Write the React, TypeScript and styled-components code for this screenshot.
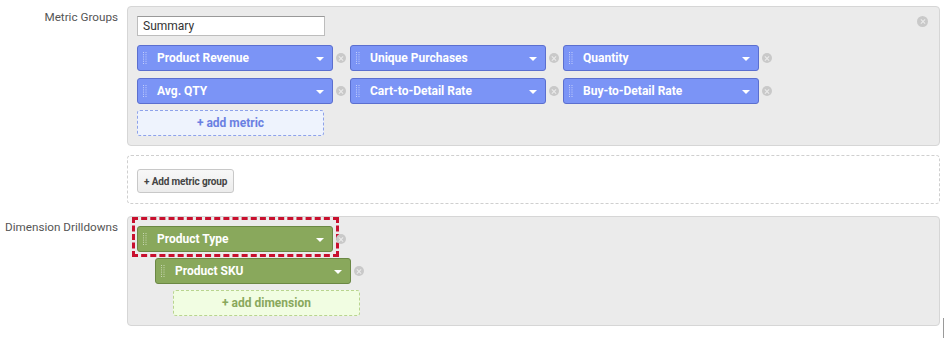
import styled, { createGlobalStyle } from "styled-components";

const GlobalStyle = createGlobalStyle`
  body {
    margin: 0;
    background: #ffffff;
    font-family: Roboto, "Liberation Sans", Arial, sans-serif;
  }
`;

const Page = styled.div`
  display: grid;
  grid-template-columns: 127px 813px;
  align-content: start;
  row-gap: 9px;
  padding-top: 6px;
  position: relative;
  height: 332px;
`;

const Label = styled.div<{ $top?: number }>`
  text-align: right;
  padding-right: 9px;
  padding-top: ${(p) => p.$top ?? 4}px;
  font-size: 11.7px;
  color: #555;
`;

const Panel = styled.div`
  position: relative;
  background: #ebebeb;
  border: 1px solid #d6d6d6;
  border-radius: 4px;
  padding: 9px;
  display: flex;
  flex-direction: column;
  align-items: flex-start;
`;

const DashedPanel = styled.div`
  border: 1px dashed #cfcfcf;
  border-radius: 4px;
  padding: 13px 9px 0;
  height: 49px;
  box-sizing: border-box;
  margin-bottom: 3px;
`;

const NameInput = styled.div`
  width: 188px;
  height: 20px;
  box-sizing: border-box;
  border: 1px solid #bdbdbd;
  border-top-color: #999;
  background: #fff;
  font-size: 12px;
  color: #333;
  padding: 2px 5px;
  margin-bottom: 9px;
`;

const ChipRow = styled.div<{ $gap?: number }>`
  display: flex;
  margin-bottom: ${(p) => p.$gap ?? 7}px;
`;

const ChipWrap = styled.div<{ $indent?: number }>`
  display: flex;
  align-items: center;
  margin-left: ${(p) => p.$indent ?? 0}px;
  margin-right: 4px;
  gap: 3px;
`;

const Chip = styled.div<{ $kind: "metric" | "dim"; $marked?: boolean }>`
  position: relative;
  width: 196px;
  height: 26px;
  box-sizing: border-box;
  border-radius: 3px;
  border: 1px solid ${(p) => (p.$kind === "metric" ? "#5b6fcf" : "#6b8844")};
  background: ${(p) => (p.$kind === "metric" ? "#7b94f6" : "#89a85c")};
  color: #fff;
  font-weight: 700;
  font-size: 12px;
  display: flex;
  align-items: center;
  padding-left: 19px;
  ${(p) =>
    p.$marked &&
    `
    &::after {
      content: "";
      position: absolute;
      left: -6px;
      top: -10px;
      right: -7px;
      bottom: -6px;
      border: 3px dashed #c8102e;
    }
  `}
`;

const GripSvg = styled.svg`
  position: absolute;
  left: 5px;
  top: 6px;
`;

const Grip = () => (
  <GripSvg width="4" height="13" viewBox="0 0 4 13">
    {[0, 1, 2, 3, 4, 5].map((r) =>
      [0, 1].map((c) => (
        <rect key={`${r}-${c}`} x={c * 2.5} y={r * 2.2} width="1" height="1" fill="rgba(255,255,255,0.55)" />
      ))
    )}
  </GripSvg>
);

const Caret = styled.span`
  position: absolute;
  right: 8px;
  top: 11px;
  width: 0;
  height: 0;
  border-left: 4px solid transparent;
  border-right: 4px solid transparent;
  border-top: 4px solid #fff;
`;

const CloseDot = styled.span`
  width: 10px;
  height: 10px;
  border-radius: 50%;
  background: #c9c9c9;
  position: relative;
  flex: none;
  &::before,
  &::after {
    content: "";
    position: absolute;
    left: 2px;
    top: 4.5px;
    width: 6px;
    height: 1px;
    background: #ebebeb;
    transform: rotate(45deg);
  }
  &::after {
    transform: rotate(-45deg);
  }
`;

const PanelClose = styled(CloseDot)`
  position: absolute;
  top: 9px;
  right: 11px;
  width: 11px;
  height: 11px;
  &::before,
  &::after {
    left: 2.5px;
    top: 5px;
  }
`;

const AddButton = styled.div<{ $kind: "metric" | "dim"; $indent?: number }>`
  width: 187px;
  height: 26px;
  box-sizing: border-box;
  margin-left: ${(p) => p.$indent ?? 0}px;
  border-radius: 3px;
  border: 1px dashed ${(p) => (p.$kind === "metric" ? "#8ea2ea" : "#b9d48f")};
  background: ${(p) => (p.$kind === "metric" ? "#eef3fd" : "#f1fde2")};
  color: ${(p) => (p.$kind === "metric" ? "#6a80e2" : "#89a85c")};
  font-weight: 700;
  font-size: 12px;
  display: flex;
  align-items: center;
  justify-content: center;
`;

const GroupButton = styled.div`
  display: inline-flex;
  align-items: center;
  height: 24px;
  box-sizing: border-box;
  padding: 0 6px;
  border: 1px solid #c8c8c8;
  border-radius: 3px;
  background: linear-gradient(#f8f8f8, #ececec);
  font-size: 10px;
  font-weight: 700;
  letter-spacing: -0.15px;
  color: #444;
`;

const ScrollMark = styled.div`
  position: absolute;
  right: 1px;
  top: 318px;
  width: 1px;
  height: 20px;
  background: #9a9a9a;
`;

type ChipProps = { label: string; kind: "metric" | "dim"; indent?: number; marked?: boolean };

const ChipItem = ({ label, kind, indent, marked }: ChipProps) => (
  <ChipWrap $indent={indent}>
    <Chip $kind={kind} $marked={marked}>
      <Grip />
      {label}
      <Caret />
    </Chip>
    <CloseDot />
  </ChipWrap>
);

const metricRows = [
  ["Product Revenue", "Unique Purchases", "Quantity"],
  ["Avg. QTY", "Cart-to-Detail Rate", "Buy-to-Detail Rate"],
];

const App = () => {
  return (
    <>
      <GlobalStyle />
      <Page>
        <Label>Metric Groups</Label>
        <Panel>
          <PanelClose />
          <NameInput>Summary</NameInput>
          {metricRows.map((row, i) => (
            <ChipRow key={i} $gap={i === 0 ? 7 : 6}>
              {row.map((m) => (
                <ChipItem key={m} label={m} kind="metric" />
              ))}
            </ChipRow>
          ))}
          <AddButton $kind="metric">+ add metric</AddButton>
        </Panel>

        <div />
        <DashedPanel>
          <GroupButton>+ Add metric group</GroupButton>
        </DashedPanel>

        <Label $top={4}>Dimension Drilldowns</Label>
        <Panel>
          <ChipRow $gap={6}>
            <ChipItem label="Product Type" kind="dim" marked />
          </ChipRow>
          <ChipRow $gap={6}>
            <ChipItem label="Product SKU" kind="dim" indent={18} />
          </ChipRow>
          <AddButton $kind="dim" $indent={36}>
            + add dimension
          </AddButton>
        </Panel>
        <ScrollMark />
      </Page>
    </>
  );
};

export default App;
